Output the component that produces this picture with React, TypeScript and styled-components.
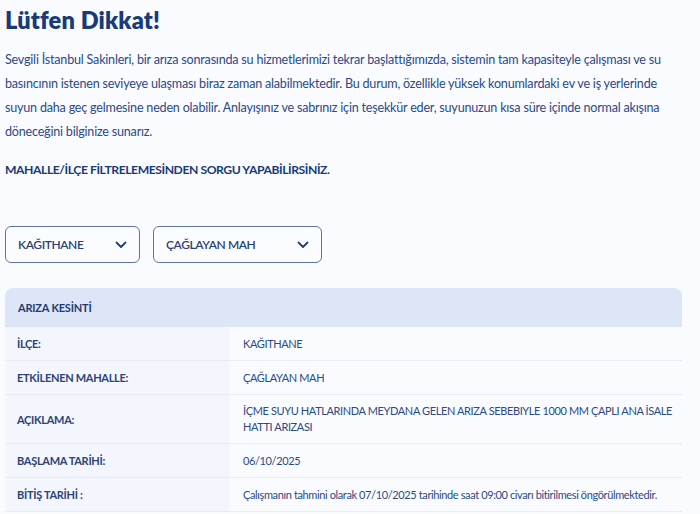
import styled, { createGlobalStyle } from "styled-components";

const navy = "#173a78";
const textColor = "#2b4a86";

const GlobalStyle = createGlobalStyle`
  html, body {
    margin: 0;
    padding: 0;
    background: #f9fbff;
  }
  body {
    font-family: "Lato", "Noto Sans", sans-serif;
    color: ${textColor};
  }
`;

const Page = styled.div`
  width: 677px;
  padding: 6px 0 0 5px;
  display: flex;
  flex-direction: column;
`;

const Title = styled.h1`
  margin: 0;
  font-size: 23.5px;
  font-weight: 800;
  color: ${navy};
  line-height: 28px;
  letter-spacing: 0.2px;
`;

const Paragraph = styled.p`
  margin: 14px 0 0;
  font-size: 12.6px;
  line-height: 24px;
  letter-spacing: -0.22px;
  color: ${textColor};
`;

const Notice = styled.p`
  margin: 18px 0 0;
  font-size: 12.2px;
  line-height: 16px;
  font-weight: 700;
  color: ${navy};
  letter-spacing: -0.45px;
`;

const Filters = styled.div`
  display: flex;
  gap: 13px;
  margin-top: 48px;
`;

const Select = styled.div<{ $width: number }>`
  width: ${(p) => p.$width}px;
  height: 37px;
  box-sizing: border-box;
  border: 1px solid #5d74a6;
  border-radius: 6px;
  background: #fbfcff;
  display: flex;
  align-items: center;
  justify-content: space-between;
  padding: 0 12px 0 12px;
  font-size: 12px;
  font-weight: 600;
  letter-spacing: -0.4px;
  color: #2a4272;
`;

const Chevron = () => (
  <svg width="12" height="8" viewBox="0 0 12 8" fill="none">
    <path d="M1.5 1.5L6 6l4.5-4.5" stroke="#243f73" strokeWidth="1.8" strokeLinecap="round" strokeLinejoin="round" />
  </svg>
);

const Table = styled.div`
  margin-top: 25px;
  display: flex;
  flex-direction: column;
`;

const Header = styled.div`
  height: 39px;
  background: #dce6f6;
  border-radius: 8px 8px 0 0;
  display: flex;
  align-items: center;
  padding-left: 13px;
  font-size: 11px;
  font-weight: 700;
  letter-spacing: -0.2px;
  color: #1f3a70;
`;

const Row = styled.div<{ $tall?: boolean }>`
  display: grid;
  grid-template-columns: 225px 1fr;
  min-height: ${(p) => (p.$tall ? 48 : 33)}px;
  border-bottom: 1px solid #e7ebf2;
`;

const Label = styled.div`
  background: #f3f6fc;
  display: flex;
  align-items: center;
  padding-left: 12px;
  font-size: 11px;
  font-weight: 700;
  letter-spacing: -0.3px;
  color: #2a4478;
`;

const Value = styled.div`
  background: #f9fbff;
  display: flex;
  align-items: center;
  padding: 0 2px 0 13px;
  font-size: 11px;
  line-height: 16px;
  letter-spacing: -0.38px;
  color: #2b4a86;
`;

const rows = [
  { label: "İLÇE:", value: "KAĞITHANE" },
  { label: "ETKİLENEN MAHALLE:", value: "ÇAĞLAYAN MAH" },
  {
    label: "AÇIKLAMA:",
    value:
      "İÇME SUYU HATLARINDA MEYDANA GELEN ARIZA SEBEBIYLE 1000 MM ÇAPLI ANA İSALE HATTI ARIZASI",
    tall: true,
  },
  { label: "BAŞLAMA TARİHİ:", value: "06/10/2025" },
  {
    label: "BİTİŞ TARİHİ :",
    value:
      "Çalışmanın tahmini olarak 07/10/2025 tarihinde saat 09:00 civarı bitirilmesi öngörülmektedir.",
  },
];

export default function App() {
  return (
    <>
      <GlobalStyle />
      <Page>
        <Title>Lütfen Dikkat!</Title>
        <Paragraph>
          Sevgili İstanbul Sakinleri, bir arıza sonrasında su hizmetlerimizi tekrar başlattığımızda,
          sistemin tam kapasiteyle çalışması ve su basıncının istenen seviyeye ulaşması biraz zaman
          alabilmektedir. Bu durum, özellikle yüksek konumlardaki ev ve iş yerlerinde suyun daha geç
          gelmesine neden olabilir. Anlayışınız ve sabrınız için teşekkür eder, suyunuzun kısa süre
          içinde normal akışına döneceğini bilginize sunarız.
        </Paragraph>
        <Notice>MAHALLE/İLÇE FİLTRELEMESİNDEN SORGU YAPABİLİRSİNİZ.</Notice>
        <Filters>
          <Select $width={135}>
            KAĞITHANE
            <Chevron />
          </Select>
          <Select $width={169}>
            ÇAĞLAYAN MAH
            <Chevron />
          </Select>
        </Filters>
        <Table>
          <Header>ARIZA KESİNTİ</Header>
          {rows.map((r) => (
            <Row key={r.label} $tall={r.tall}>
              <Label>{r.label}</Label>
              <Value>{r.value}</Value>
            </Row>
          ))}
        </Table>
      </Page>
    </>
  );
}
